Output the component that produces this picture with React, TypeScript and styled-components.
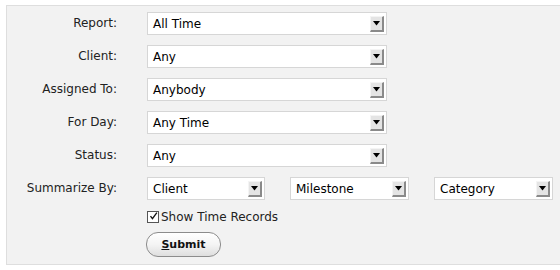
import React, { useState } from 'react'
import styled, { createGlobalStyle } from 'styled-components'

const GlobalStyle = createGlobalStyle`
    body {
        margin: 0;
        background: #fff;
        font-family: "DejaVu Sans", "Liberation Sans", sans-serif;
        overflow: hidden;
    }
`

const rows = [
    { label: 'Report:', value: 'All Time' },
    { label: 'Client:', value: 'Any' },
    { label: 'Assigned To:', value: 'Anybody' },
    { label: 'For Day:', value: 'Any Time' },
    { label: 'Status:', value: 'Any' },
]

const Select = ({ value, width }: { value: string; width: number }) => (
    <SelectBox $width={width}>
        <SelectText>{value}</SelectText>
        <ArrowButton>
            <svg width="7" height="5" viewBox="0 0 7 5">
                <path d="M0 0H7L3.5 4.5Z" fill="#000" />
            </svg>
        </ArrowButton>
    </SelectBox>
)

const App = () => {
    const [showRecords, setShowRecords] = useState(true)

    return (
        <>
            <GlobalStyle />
            <Panel>
                <Form>
                    {rows.map((r) => (
                        <React.Fragment key={r.label}>
                            <Label>{r.label}</Label>
                            <Select value={r.value} width={240} />
                        </React.Fragment>
                    ))}
                    <Label>Summarize By:</Label>
                    <SummaryRow>
                        <Select value="Client" width={118} />
                        <Select value="Milestone" width={119} />
                        <Select value="Category" width={119} />
                    </SummaryRow>
                    <span />
                    <CheckRow onClick={() => setShowRecords((v) => !v)}>
                        <CheckBox>
                            {showRecords && (
                                <svg width="12" height="12" viewBox="0 0 12 12">
                                    <path d="M2 6.2L4.6 9.5L10.5 1.5" stroke="#111" strokeWidth="1.8" fill="none" />
                                </svg>
                            )}
                        </CheckBox>
                        Show Time Records
                    </CheckRow>
                    <span />
                    <ButtonCell>
                        <SubmitButton type="button">
                            <u>S</u>ubmit
                        </SubmitButton>
                    </ButtonCell>
                </Form>
            </Panel>
        </>
    )
}

const Panel = styled.div`
    margin: 5px 0 0 6px;
    height: 260px;
    box-sizing: border-box;
    background: #f2f2f2;
    border: 1px solid #dedede;
    border-right: none;
`

const Form = styled.div`
    display: grid;
    grid-template-columns: 110px auto;
    column-gap: 30px;
    row-gap: 10px;
    align-items: center;
    padding-top: 6px;
    justify-content: start;
`

const Label = styled.div`
    text-align: right;
    font-size: 12px;
    color: #222;
    line-height: 23px;
`

const SelectBox = styled.div<{ $width: number }>`
    width: ${(p) => p.$width}px;
    height: 23px;
    box-sizing: border-box;
    background: #fff;
    border: 1px solid #d6d6d6;
    display: flex;
    align-items: center;
    justify-content: space-between;
    padding: 0 2px 0 5px;
`

const SelectText = styled.span`
    font-size: 12px;
    color: #000;
`

const ArrowButton = styled.div`
    width: 14px;
    height: 16px;
    box-sizing: border-box;
    background: #e4e4e4;
    border-right: 2px solid #8a8a8a;
    border-bottom: 2px solid #8a8a8a;
    border-top: 1px solid #f4f4f4;
    border-left: 1px solid #f4f4f4;
    display: flex;
    align-items: center;
    justify-content: center;
    svg {
        margin-top: 1px;
    }
`

const SummaryRow = styled.div`
    display: flex;
    gap: 25px;
`

const CheckRow = styled.label`
    display: flex;
    align-items: center;
    gap: 2px;
    font-size: 12px;
    color: #222;
    height: 16px;
    margin-top: -1px;
    cursor: pointer;
`

const CheckBox = styled.span`
    width: 12px;
    height: 12px;
    box-sizing: border-box;
    border: 1px solid #555;
    background: #fff;
    display: flex;
    align-items: center;
    justify-content: center;
    svg {
        margin-top: -2px;
        margin-left: 1px;
    }
`

const ButtonCell = styled.div`
    margin-top: -3px;
`

const SubmitButton = styled.button`
    width: 75px;
    height: 25px;
    margin-left: -1px;
    border-radius: 12px;
    border: 1px solid #8c8c8c;
    background: linear-gradient(180deg, #ffffff 0%, #f4f4f4 50%, #dedede 100%);
    font-family: "DejaVu Sans", "Liberation Sans", sans-serif;
    font-size: 11px;
    font-weight: bold;
    color: #111;
    padding: 0;
    cursor: pointer;
    u {
        text-decoration: underline;
    }
`

export default App
